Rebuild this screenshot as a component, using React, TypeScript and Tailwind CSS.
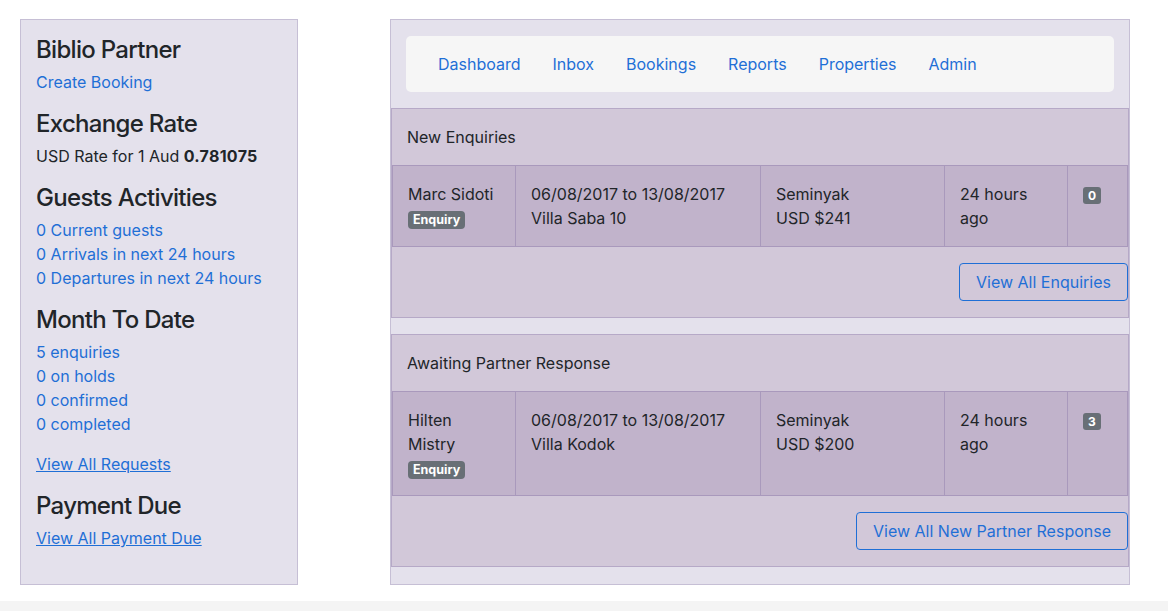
import React from 'react';

const font = { fontFamily: 'Inter, "Noto Sans", sans-serif' };

const navItems = ['Dashboard', 'Inbox', 'Bookings', 'Reports', 'Properties', 'Admin'];

type Row = {
  name: string[];
  dates: string;
  villa: string;
  area: string;
  price: string;
  count: string;
};

const sections: Array<{ title: string; button: string; row: Row }> = [
  {
    title: 'New Enquiries',
    button: 'View All Enquiries',
    row: { name: ['Marc Sidoti'], dates: '06/08/2017 to 13/08/2017', villa: 'Villa Saba 10', area: 'Seminyak', price: 'USD $241', count: '0' },
  },
  {
    title: 'Awaiting Partner Response',
    button: 'View All New Partner Response',
    row: { name: ['Hilten', 'Mistry'], dates: '06/08/2017 to 13/08/2017', villa: 'Villa Kodok', area: 'Seminyak', price: 'USD $200', count: '3' },
  },
];

function Heading({ children }: { children: React.ReactNode }) {
  return <h4 className="mb-[6px] text-[24px] font-medium leading-[28px] tracking-[-0.7px] text-[#212529]">{children}</h4>;
}

function Sidebar() {
  return (
    <aside className="w-[278px] shrink-0 border border-[#c6bfd5] bg-[#e4e1ec] px-[15px] pt-4 pb-4">
      <Heading>Biblio Partner</Heading>
      <div className="mb-4 text-[#1f6fd6]">Create Booking</div>

      <Heading>Exchange Rate</Heading>
      <div className="mb-4 text-[#212529]">
        USD Rate for 1 Aud <span className="font-bold tracking-[0.3px]">0.781075</span>
      </div>

      <Heading>Guests Activities</Heading>
      <div className="mb-4 text-[#1f6fd6]">
        <div>0 Current guests</div>
        <div>0 Arrivals in next 24 hours</div>
        <div>0 Departures in next 24 hours</div>
      </div>

      <Heading>Month To Date</Heading>
      <div className="mb-4 text-[#1f6fd6]">
        <div>5 enquiries</div>
        <div>0 on holds</div>
        <div>0 confirmed</div>
        <div>0 completed</div>
      </div>
      <div className="mb-4 text-[#1f6fd6] underline">View All Requests</div>

      <Heading>Payment Due</Heading>
      <div className="mb-4 text-[#1f6fd6] underline">View All Payment Due</div>
    </aside>
  );
}

function Card({ title, button, row }: { title: string; button: string; row: Row }) {
  const cell = 'border-l border-[#a999bc] px-[15px] pt-4 pb-4';
  return (
    <div className="border border-[#b6a9c7] bg-[#d2c8d9]">
      <div className="border-b border-[#a999bc] px-[15px] py-4 text-[#212529]">{title}</div>
      <div className="flex border-b border-[#a999bc] bg-[#c1b3cb] text-[#212529]">
        <div className={`${cell} w-[123px]`}>
          {row.name.map((n) => (
            <div key={n}>{n}</div>
          ))}
          <div className="mt-[5px] flex">
            <span className="flex h-[18px] items-center rounded-[4px] bg-[#686f76] px-[5px] text-[12.5px] font-bold leading-none text-white">
              Enquiry
            </span>
          </div>
        </div>
        <div className={`${cell} w-[245px]`}>
          <div>{row.dates}</div>
          <div>{row.villa}</div>
        </div>
        <div className={`${cell} w-[184px]`}>
          <div>{row.area}</div>
          <div>{row.price}</div>
        </div>
        <div className={`${cell} w-[123px]`}>
          <div>24 hours</div>
          <div>ago</div>
        </div>
        <div className={`${cell} flex-1 border-r`}>
          <div className="mt-[5px] flex">
            <span className="flex h-[17px] items-center rounded-[3px] bg-[#686f76] px-[5px] text-[12px] font-bold leading-none text-white">
              {row.count}
            </span>
          </div>
        </div>
      </div>
      <div className="flex justify-end py-4">
        <button className="h-[38px] rounded-[4px] border border-[#1f6fd6] px-4 text-[#1f6fd6]">{button}</button>
      </div>
    </div>
  );
}

export default function App() {
  return (
    <div className="min-h-screen bg-white text-[16px] leading-6" style={font}>
      <div className="flex items-stretch pt-[19px] pb-4 pl-5">
        <Sidebar />
        <main className="ml-[92px] w-[740px] shrink-0 border border-[#c6bfd5] bg-[#e4e1ec] pb-[17px]">
          <div className="px-[15px] pt-4 pb-4">
            <nav className="flex rounded-[5px] bg-[#f6f6f6] px-4 py-4">
              {navItems.map((item) => (
                <a key={item} className="px-4 text-[#1f6fd6]">
                  {item}
                </a>
              ))}
            </nav>
          </div>
          <div className="flex flex-col gap-4">
            {sections.map((s) => (
              <Card key={s.title} title={s.title} button={s.button} row={s.row} />
            ))}
          </div>
        </main>
      </div>
      <div className="h-[40px] bg-[#f4f4f4]" />
    </div>
  );
}
